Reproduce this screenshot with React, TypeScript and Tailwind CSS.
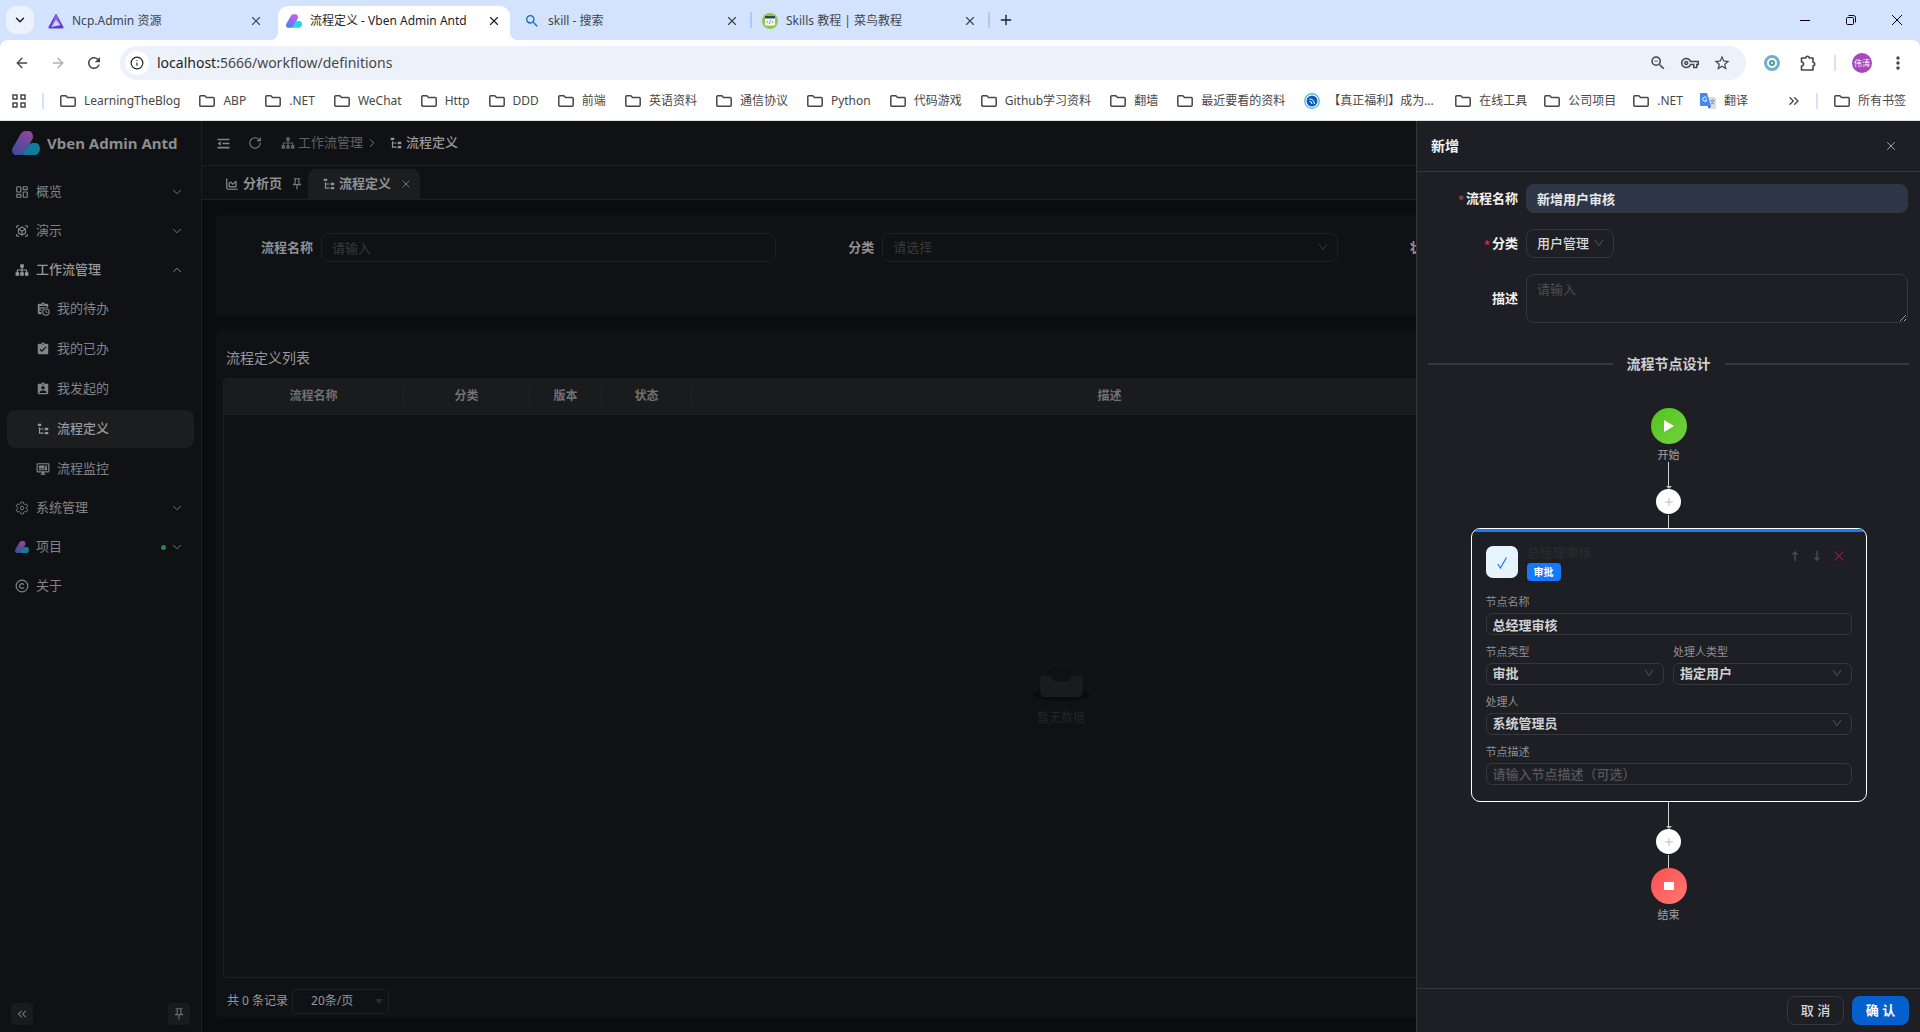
import React from 'react';
import { ArrowLeft, ArrowRight, ChartArea, ChevronDown, ChevronRight, ChevronUp, ChevronsLeft, ChevronsRight, Copyright, Info, LayoutDashboard, Plus, RotateCw, X } from 'lucide-react';
import { MdAssignmentInd, MdMoreVert, MdOutlinePushPin, MdOutlineVpnKey, MdRefresh, MdSearch, MdStarBorder, MdViewInAr, MdZoomOut } from 'react-icons/md';
import { IoSettingsOutline } from 'react-icons/io5';

interface IconProps {
  className?: string;
}

function PathIcon({ d, className }: IconProps & { d: string }) {
  return (
    <svg viewBox="0 0 24 24" fill="currentColor" className={className} aria-hidden="true">
      <path fillRule="evenodd" d={d} />
    </svg>
  );
}

const SITEMAP = 'M9 2v6h2v3H5c-1.11 0-2 .89-2 2v3H1v6h6v-6H5v-3h6v3H9v6h6v-6h-2v-3h6v3h-2v6h6v-6h-2v-3c0-1.11-.89-2-2-2h-6V8h2V2H9z';
const FILE_TREE = 'M3 3h6v4H3V3m12 7h6v4h-6v-4m0 7h6v4h-6v-4m-2-4H7v5h6v2H5V9h2v2h6v2z';
const MONITOR = 'M21 16V4H3v12h18m0-14a2 2 0 0 1 2 2v12a2 2 0 0 1-2 2h-7v2h2v2H8v-2h2v-2H3a2 2 0 0 1-2-2V4c0-1.11.89-2 2-2h18M5 6h9v5H5V6m10 0h4v2h-4V6m4 3v5h-4V9h4M5 12h4v2H5v-2m5 0h4v2h-4v-2z';
const CLIPBOARD_CHECK = 'M10 17l-4-4 1.41-1.41L10 14.17l6.59-6.59L18 9l-8 8M12 3a1 1 0 1 1 0 2 1 1 0 0 1 0-2m7 0h-4.18C14.4 1.84 13.3 1 12 1s-2.4.84-2.82 2H5a2 2 0 0 0-2 2v14a2 2 0 0 0 2 2h14a2 2 0 0 0 2-2V5a2 2 0 0 0-2-2z';

const SitemapIcon = ({ className }: IconProps) => <PathIcon d={SITEMAP} className={className} />;
const FileTreeIcon = ({ className }: IconProps) => <PathIcon d={FILE_TREE} className={className} />;
const MonitorIcon = ({ className }: IconProps) => <PathIcon d={MONITOR} className={className} />;
const ClipboardCheckIcon = ({ className }: IconProps) => <PathIcon d={CLIPBOARD_CHECK} className={className} />;

function ClipboardClockIcon({ className }: IconProps) {
  return (
    <svg viewBox="0 0 24 24" fill="currentColor" className={className} aria-hidden="true">
      <path fillRule="evenodd" d="M19 3h-4.18C14.4 1.84 13.3 1 12 1s-2.4.84-2.82 2H5a2 2 0 0 0-2 2v14a2 2 0 0 0 2 2h5a8 8 0 0 1-1-4H6v-2h3.3a8 8 0 0 1 1-2H6v-2h7a8 8 0 0 1 8-1V5a2 2 0 0 0-2-2m-7 0a1 1 0 1 1 0 2 1 1 0 0 1 0-2M6 7h12v2H6V7z" />
      <circle cx="17" cy="17" r="5.5" fill="none" stroke="currentColor" strokeWidth="2" />
      <path d="M16.2 13.5h1.6v3.2l2.4 1.4-.8 1.3-3.2-1.8z" />
    </svg>
  );
}

function FoldIcon({ className }: IconProps) {
  return (
    <svg viewBox="0 0 24 24" fill="currentColor" className={className} aria-hidden="true">
      <path d="M1 3h22v3H1zM10 10.5h13v3H10zM1 18h22v3H1zM7 8v8l-6-4z" />
    </svg>
  );
}

function FolderIcon() {
  return (
    <svg viewBox="0 0 16 16" className="size-4 shrink-0" fill="none" stroke="#474747" strokeWidth="1.5" aria-hidden="true">
      <path d="M1.7 2.8h4.1l1.7 1.7h6.8q.9 0 .9.9v6.900q0 .9-.9.900H1.700q-.9 0-.9-.9V3.700q0-.9.9-.9z" />
    </svg>
  );
}

function PuzzleIcon({ className }: IconProps) {
  return (
    <svg viewBox="0 0 18 18" className={className} fill="none" stroke="currentColor" strokeWidth="1.6" strokeLinejoin="round" aria-hidden="true">
      <path d="M2.500 4h4.300a1.700 1.700 0 0 1 3.400 0h3.800v4.300a1.700 1.700 0 0 1 0 3.400V16H2.500v-4a2 2 0 0 0 0-4z" />
    </svg>
  );
}

function VbenLogo({ className, bright }: IconProps & { bright?: boolean }) {
  const id = bright ? 'vbenBright' : 'vbenDim';
  return (
    <svg viewBox="0 0 28 24" className={className} aria-hidden="true">
      <defs>
        <linearGradient id={id} x1="0.7" y1="0" x2="0.3" y2="1">
          <stop offset="0" stopColor={bright ? '#c863e6' : '#8d4699'} />
          <stop offset="1" stopColor={bright ? '#4d7bfa' : '#3b4e9b'} />
        </linearGradient>
      </defs>
      <path d="M9 2.500Q10.500 0 13 0h4q2 0 3 2l.8 2q.7 2-.3 4L12.500 22q-1 2-3.500 2H4q-2 0-3-1.500l-.7-1.500q-.7-2 .3-4z" fill={`url(#${id})`} />
      <path d="M16.500 14.500q1.500-2.500 4-2.500H24q2 0 3 2l.7 2q.6 2-.2 4l-1 2q-1 2-3 2H12q-1.500 0-.8-1.500z" fill={bright ? '#21d4f7' : '#0e7c9a'} />
    </svg>
  );
}

function SelectArrow({ className }: IconProps) {
  return (
    <svg viewBox="0 0 10 8" fill="none" stroke="currentColor" className={className} aria-hidden="true">
      <path d="M1 1l4 5.500L9 1" />
    </svg>
  );
}

/* browser window */

const tabs = [
  { title: 'Ncp.Admin 资源', icon: 'ncp' },
  { title: '流程定义 - Vben Admin Antd', icon: 'vben', active: true },
  { title: 'skill - 搜索', icon: 'search' },
  { title: 'Skills 教程 | 菜鸟教程', icon: 'runoob' },
];

const bookmarks = ['LearningTheBlog', 'ABP', '.NET', 'WeChat', 'Http', 'DDD', '前端', '英语资料', '通信协议', 'Python', '代码游戏', 'Github学习资料', '翻墙', '最近要看的资料'];

function Favicon({ icon }: { icon: string }) {
  if (icon === 'vben') return <VbenLogo className="size-4 shrink-0" bright />;
  if (icon === 'search') return <MdSearch className="size-4 shrink-0 text-[#0f6cbd]" />;
  if (icon === 'ncp') {
    return (
      <svg viewBox="0 0 16 16" className="size-4 shrink-0" aria-hidden="true">
        <path d="M8 .5L.5 14q-.3 1.500 1 1.500h13q1.300 0 1-1.500z" fill="#5b3fc4" />
        <path d="M8 2l4.500 9.500L3 14z" fill="#8c6cf0" />
        <path d="M8 7l4.500 5L3.500 14z" fill="#d9cdfb" />
      </svg>
    );
  }
  return (
    <svg viewBox="0 0 16 16" className="size-4 shrink-0" aria-hidden="true">
      <circle cx="8" cy="8" r="8" fill="#8cc84b" />
      <rect x="3" y="3.5" width="10" height="9" rx="1" fill="#fff" />
      <rect x="3" y="3" width="10" height="2.5" fill="#2f4858" />
      <path d="M6 7.500L4.700 9 6 10.500M10 7.500L11.300 9 10 10.500M8.500 7l-1 4" fill="none" stroke="#6b7a80" strokeWidth=".8" />
    </svg>
  );
}

function BrowserTabs() {
  return (
    <div className="flex h-10 items-end bg-[#d3e3fd] pl-1.5 text-[#1f1f1f]">
      <button type="button" aria-label="搜索标签页" className="mb-1.5 mr-1.5 flex size-7 items-center justify-center rounded-[10px] bg-[#ebf2fe]">
        <ChevronDown className="size-3.5" strokeWidth={2.5} />
      </button>
      {tabs.map((tab, index) => (
        <div key={tab.title} className="flex">
          <div className={tab.active ? 'relative flex h-[34px] w-[232px] items-center rounded-t-[10px] bg-white px-2 pb-1' : 'flex h-[34px] w-[232px] items-center px-2 pb-1 text-[#41454d]'}>
            {tab.active && <span className="absolute -left-2 bottom-0 size-2 bg-[radial-gradient(circle_at_0_0,#d3e3fd_8px,#fff_8px)]" />}
            {tab.active && <span className="absolute -right-2 bottom-0 size-2 bg-[radial-gradient(circle_at_100%_0,#d3e3fd_8px,#fff_8px)]" />}
            <Favicon icon={tab.icon} />
            <span className="ml-2 flex-1 truncate text-xs">{tab.title}</span>
            <button type="button" aria-label="关闭标签页" className="flex size-4 items-center justify-center">
              <X className="size-3.5" strokeWidth={2} />
            </button>
          </div>
          <span className={index > 1 ? 'mx-0.5 mt-1.5 h-4 w-0.5 rounded bg-[#a8c7fa]' : 'w-1.5'} />
        </div>
      ))}
      <button type="button" aria-label="新标签页" className="mb-3 ml-1.5 flex size-4 items-center justify-center">
        <Plus className="size-4" />
      </button>
      <div className="ml-auto flex h-10 items-center">
        <button type="button" aria-label="最小化" className="flex w-[46px] justify-center">
          <svg viewBox="0 0 10 10" className="size-2.5" stroke="#000"><path d="M0 5.500h10" /></svg>
        </button>
        <button type="button" aria-label="还原" className="flex w-[46px] justify-center">
          <svg viewBox="0 0 10 10" className="size-2.5" stroke="#000" fill="none"><path d="M.5 3.500q0-1 1-1h5q1 0 1 1v5q0 1-1 1h-5q-1 0-1-1zM2.500.5h5q2 0 2 2v5" /></svg>
        </button>
        <button type="button" aria-label="关闭" className="flex w-[46px] justify-center">
          <svg viewBox="0 0 10 10" className="size-2.5" stroke="#000"><path d="M0 0l10 10M10 0L0 10" /></svg>
        </button>
      </div>
    </div>
  );
}

function AddressBar() {
  return (
    <div className="bg-[#d3e3fd]">
      <div className="flex h-[46px] items-center rounded-t-lg bg-white px-3 text-[#474747]">
        <button type="button" aria-label="后退" className="flex size-5 items-center justify-center"><ArrowLeft className="size-4" /></button>
        <button type="button" aria-label="前进" className="ml-4 flex size-5 items-center justify-center text-[#b0b0b0]"><ArrowRight className="size-4" /></button>
        <button type="button" aria-label="重新加载" className="ml-4 flex size-5 items-center justify-center"><MdRefresh className="size-[18px]" /></button>
        <div className="ml-4 flex h-[34px] flex-1 items-center rounded-full bg-[#ecf1fa] pl-[5px] pr-[15px]">
          <span className="flex size-6 items-center justify-center rounded-full bg-white"><Info className="size-3.5 text-[#1f1f1f]" /></span>
          <div className="ml-2 flex-1 text-sm">
            <span className="text-[#1f1f1f]">localhost:</span>5666/workflow/definitions
          </div>
          <MdZoomOut className="size-[18px]" />
          <MdOutlineVpnKey className="ml-3.5 size-[18px]" />
          <MdStarBorder className="ml-3.5 size-[18px]" />
        </div>
        <svg viewBox="0 0 16 16" className="ml-[18px] size-4" aria-hidden="true">
          <circle cx="8" cy="8" r="6.5" fill="#fff" stroke="#6fb0d2" strokeWidth="3" />
          <circle cx="8" cy="8" r="3" fill="#4f9e9a" />
          <circle cx="8" cy="8" r="1" fill="#fff" />
        </svg>
        <PuzzleIcon className="ml-[19px] size-[18px]" />
        <span className="ml-[17px] h-4 w-0.5 bg-[#d3e3fd]" />
        <button type="button" aria-label="个人资料" className="ml-4 size-5 rounded-full bg-[#a846bb] text-[8px] leading-5 text-white">伟涛</button>
        <button type="button" aria-label="菜单" className="ml-4 flex size-5 items-center justify-center"><MdMoreVert className="size-5" /></button>
      </div>
    </div>
  );
}

function Bookmark({ label, children }: { label: string; children?: React.ReactNode }) {
  return (
    <a href="#" className="flex shrink-0 items-center gap-2">
      {children || <FolderIcon />}
      {label}
    </a>
  );
}

function BookmarkBar() {
  return (
    <nav className="flex h-[35px] items-center border-b border-[#dfe3e1] bg-white pb-1 pl-3 pr-3.5 text-xs text-[#474747]">
      <svg viewBox="0 0 14 14" className="size-3.5 shrink-0" fill="none" stroke="#474747" strokeWidth="1.5" aria-hidden="true">
        <path d="M1 1h4v4H1zM9 1h4v4H9zM1 9h4v4H1zM9 9h4v4H9z" />
      </svg>
      <span className="ml-4 h-4 w-0.5 shrink-0 bg-[#d3e3fd]" />
      <div className="ml-4 flex gap-[19px]">
        {bookmarks.map((name) => <Bookmark key={name} label={name} />)}
        <Bookmark label="【真正福利】成为...">
          <svg viewBox="0 0 16 16" className="size-4 shrink-0" aria-hidden="true">
            <circle cx="8" cy="8" r="7.3" fill="#fff" stroke="#45b0e8" strokeWidth="1.2" />
            <circle cx="8" cy="8" r="5.5" fill="#0b5cb5" />
            <path d="M5.500 6a5 5 0 0 1 5 5M5.500 8.300A2.700 2.700 0 0 1 8 11" fill="none" stroke="#fff" />
          </svg>
        </Bookmark>
      </div>
      <div className="ml-auto flex gap-[17px]">
        <Bookmark label="在线工具" />
        <Bookmark label="公司项目" />
        <Bookmark label=".NET" />
        <Bookmark label="翻译">
          <svg viewBox="0 0 16 16" className="size-4 shrink-0" aria-hidden="true">
            <path d="M7 4h8q1 0 1 1v10q0 1-1 1H10z" fill="#dadce0" />
            <path d="M1 0h6l4 13H1q-1 0-1-1V1q0-1 1-1z" fill="#4688f1" />
            <path d="M8 13h3l-2 3z" fill="#2a56c6" />
            <path d="M6.800 5A2.200 2.200 0 1 0 7 7H5" fill="none" stroke="#fff" strokeWidth="1" />
            <path d="M10.500 7.500h4M12.500 6.500v1M11 11q2.500-1 3-3.500M11.500 8.500q.8 2 2.500 2.500" fill="none" stroke="#7b8086" strokeWidth=".8" />
          </svg>
        </Bookmark>
      </div>
      <ChevronsRight className="ml-[38px] size-4 shrink-0" />
      <span className="ml-3.5 mr-4 h-4 w-0.5 shrink-0 bg-[#d3e3fd]" />
      <Bookmark label="所有书签" />
    </nav>
  );
}

/* admin layout */

function MenuItem({ icon: Icon, label, arrow, active, dot }: { icon: React.ElementType; label: string; arrow?: 'up' | 'down'; active?: boolean; dot?: boolean }) {
  return (
    <button type="button" className={active ? 'flex h-[38px] w-full items-center rounded-lg px-2 font-medium text-[#97989a]' : 'flex h-[38px] w-full items-center rounded-lg px-2 text-[#838486]'}>
      <Icon className="size-3.5 shrink-0" />
      <span className="ml-[7px] flex-1 text-left">{label}</span>
      {dot && <span className="mr-1 size-[5px] rounded-full bg-[#31814f]" />}
      {arrow === 'down' && <ChevronDown className="mr-0.5 size-3.5" strokeWidth={1.5} />}
      {arrow === 'up' && <ChevronUp className="mr-0.5 size-3.5" strokeWidth={1.5} />}
    </button>
  );
}

const workflowMenu = [
  { label: '我的待办', icon: ClipboardClockIcon },
  { label: '我的已办', icon: ClipboardCheckIcon },
  { label: '我发起的', icon: MdAssignmentInd },
  { label: '流程定义', icon: FileTreeIcon, active: true },
  { label: '流程监控', icon: MonitorIcon },
];

function Sidebar() {
  return (
    <aside className="flex w-[202px] shrink-0 flex-col border-r border-[#1e1f22] bg-[#0f1114]">
      <div className="flex h-11 shrink-0 items-center pl-3">
        <VbenLogo className="h-6 w-7" />
        <span className="ml-[7px] text-[15px] font-bold text-[#8c8d8f]">Vben Admin Antd</span>
      </div>
      <nav className="mt-2 flex flex-1 flex-col gap-px px-[7px]">
        <MenuItem icon={LayoutDashboard} label="概览" arrow="down" />
        <MenuItem icon={MdViewInAr} label="演示" arrow="down" />
        <MenuItem icon={SitemapIcon} label="工作流管理" arrow="up" active />
        <div className="flex flex-col gap-0.5">
          {workflowMenu.map(({ label, icon: Icon, active }) => (
            <a key={label} href="#" className={active ? 'flex h-[38px] items-center gap-[7px] rounded-lg bg-[#1c1d1f] pl-[29px] font-medium text-[#97989a]' : 'flex h-[38px] items-center gap-[7px] rounded-lg pl-[29px] text-[#838486]'}>
              <Icon className="size-3.5" />
              {label}
            </a>
          ))}
        </div>
        <MenuItem icon={IoSettingsOutline} label="系统管理" arrow="down" />
        <MenuItem icon={VbenLogo} label="项目" arrow="down" dot />
        <MenuItem icon={Copyright} label="关于" />
      </nav>
      <div className="flex items-center justify-between px-[11px] pb-[7px] text-[#6b6c6e]">
        <button type="button" aria-label="收起菜单" className="flex size-[22px] items-center justify-center rounded bg-[#1a1b1d]"><ChevronsLeft className="size-3.5" /></button>
        <button type="button" aria-label="固定菜单" className="flex size-[22px] items-center justify-center rounded bg-[#1a1b1d]"><MdOutlinePushPin className="size-3.5" /></button>
      </div>
    </aside>
  );
}

function PageHeader() {
  return (
    <>
      <header className="flex h-[45px] shrink-0 items-center border-b border-[#1e1f22] bg-[#0f1114] pl-[15px] text-[#838486]">
        <button type="button" aria-label="折叠侧边栏"><FoldIcon className="size-[13px]" /></button>
        <button type="button" aria-label="刷新" className="ml-[18px]"><RotateCw className="size-3.5" strokeWidth={1.75} /></button>
        <a href="#" className="ml-[19px] flex items-center gap-[3px] text-[#606163]">
          <SitemapIcon className="size-3.5" />
          工作流管理
        </a>
        <ChevronRight className="ml-0.5 size-3.5" strokeWidth={1.5} />
        <span className="ml-2.5 flex items-center gap-[3px] font-medium text-[#97989a]">
          <FileTreeIcon className="size-3.5" />
          流程定义
        </span>
      </header>
      <div className="flex h-[34px] shrink-0 items-end border-b border-[#1e1f22] bg-[#0f1114] pl-[23px] font-bold text-[#8f9092]">
        <a href="#" className="flex h-[30px] items-center gap-1">
          <ChartArea className="size-3.5" />
          分析页
          <MdOutlinePushPin className="ml-1 size-3.5 text-[#77787a]" />
        </a>
        <div className="ml-1 flex h-[30px] items-center gap-[3px] rounded-t-lg bg-[#1c1d1f] pl-3.5 pr-2">
          <FileTreeIcon className="size-3.5" />
          流程定义
          <button type="button" aria-label="关闭" className="ml-1.5"><X className="size-3" strokeWidth={1.5} /></button>
        </div>
      </div>
    </>
  );
}

function SearchForm() {
  return (
    <form className="grid h-[102px] shrink-0 grid-cols-3 items-start gap-2 rounded-md bg-[#0f1114] px-[7px] pt-[18px]">
      <div className="flex items-center">
        <label htmlFor="q-name" className="w-[98px] pr-2 text-right font-bold text-[#8f9092]">流程名称</label>
        <input id="q-name" placeholder="请输入" className="h-[29px] min-w-0 flex-1 rounded-lg border border-[#1e1f22] bg-transparent px-2.5 placeholder:text-[#38393b]" />
      </div>
      <div className="flex items-center">
        <label htmlFor="q-category" className="w-[98px] pr-2 text-right font-bold text-[#8f9092]">分类</label>
        <div className="relative min-w-0 flex-1">
          <select id="q-category" className="block h-[29px] w-full appearance-none rounded-lg border border-[#1e1f22] bg-transparent px-2.5 text-[#38393b]">
            <option>请选择</option>
          </select>
          <SelectArrow className="pointer-events-none absolute right-2.5 top-2.5 h-2 w-2.5 text-[#38393b]" />
        </div>
      </div>
      <div className="flex items-center">
        <label htmlFor="q-status" className="w-[98px] pr-2 text-right font-bold text-[#8f9092]">状态</label>
        <select id="q-status" className="h-[29px] min-w-0 flex-1 appearance-none rounded-lg border border-[#1e1f22] bg-transparent" />
      </div>
    </form>
  );
}

const columns = [
  { title: '流程名称', width: 'w-[180px]' },
  { title: '分类', width: 'w-[126px]' },
  { title: '版本', width: 'w-[72px]' },
  { title: '状态', width: 'w-[90px]' },
  { title: '描述', width: '' },
  { title: '', width: 'w-[370px]' },
];

function DefinitionTable() {
  return (
    <section className="flex min-h-0 flex-1 flex-col rounded-md bg-[#0f1114] px-[7px]">
      <h2 className="pb-[9px] pl-[3px] pt-[18px] text-sm leading-[22px] text-[#97989a]">流程定义列表</h2>
      <div className="flex flex-1 flex-col overflow-hidden rounded border border-[#1e1f22]">
        <table className="w-full table-fixed border-collapse bg-[#1a1b1d] text-xs text-[#707173]">
          <thead>
            <tr className="h-[35px] border-b border-[#1e1f22]">
              {columns.map((column) => (
                <th key={column.title} className={`p-0 font-bold ${column.width}`}>
                  <div className="flex h-[18px] items-center justify-center border-r border-[#242527]">{column.title}</div>
                </th>
              ))}
            </tr>
          </thead>
        </table>
        <div className="flex flex-1 flex-col items-center justify-center">
          <svg viewBox="0 0 64 41" className="h-[37px] w-[57px]" aria-hidden="true">
            <ellipse cx="32" cy="33" rx="32" ry="7" fill="#0a0b0d" />
            <path d="M55 12.800L44.900 1.300C44.400.5 43.700 0 42.900 0H21.100c-.8 0-1.500.5-2 1.300L9 12.800V22h46z" fill="none" stroke="#1f2022" />
            <path d="M41.600 16c0-1.700 1-3 2.300-3H55v18.100c0 2.200-1.300 3.900-3 3.900H12c-1.700 0-3-1.700-3-3.900V13h11.100c1.300 0 2.300 1.300 2.300 3s1 2.900 2.300 2.900h14.600c1.300 0 2.300-1.300 2.300-3z" fill="#1a1b1d" stroke="#1f2022" />
          </svg>
          <p className="mt-2 text-xs text-[#242527]">暂无数据</p>
        </div>
      </div>
      <div className="flex h-10 shrink-0 items-center pl-1 pt-1.5 text-xs text-[#97989a]">
        <span>共 0 条记录</span>
        <div className="relative ml-1">
          <select aria-label="每页条数" className="block h-[25px] w-[97px] appearance-none rounded border border-[#1e1f22] bg-transparent pl-[18px]">
            <option>20条/页</option>
          </select>
          <span className="pointer-events-none absolute right-1.5 top-2.5 border-x-4 border-t-[5px] border-x-transparent border-t-[#2c2d2f]" />
        </div>
      </div>
    </section>
  );
}

/* drawer */

function NodeSelect({ id, label, value }: { id: string; label: string; value: string }) {
  return (
    <div className="min-w-0 flex-1">
      <label htmlFor={id} className="mb-[3px] block text-[11px] leading-4 text-[#8f9092]">{label}</label>
      <div className="relative">
        <select id={id} className="block h-[22px] w-full appearance-none rounded-md border border-[#36373c] bg-transparent px-1.5 font-bold text-[#cfd0d1]">
          <option>{value}</option>
        </select>
        <SelectArrow className="pointer-events-none absolute right-2.5 top-1.5 h-2 w-2.5 text-[#55565a]" />
      </div>
    </div>
  );
}

function NodeInput({ id, label, value, placeholder }: { id: string; label: string; value?: string; placeholder?: string }) {
  return (
    <div>
      <label htmlFor={id} className="mb-[3px] block text-[11px] leading-4 text-[#8f9092]">{label}</label>
      <input id={id} defaultValue={value} placeholder={placeholder} className="block h-[22px] w-full rounded-md border border-[#36373c] bg-transparent px-1.5 font-bold text-[#cfd0d1] placeholder:font-medium placeholder:text-[#56575b]" />
    </div>
  );
}

function Connector() {
  return (
    <>
      <div className="flex h-[27px] flex-col items-center">
        <span className="w-px flex-1 bg-[#d0d0d0]" />
        <span className="border-x-[3px] border-t-[3px] border-x-transparent border-t-[#bfbfbf]" />
      </div>
      <button type="button" aria-label="添加节点" className="flex size-[25px] items-center justify-center rounded-full bg-white text-[#bfbfbf]">
        <Plus className="size-3" strokeWidth={2} />
      </button>
      <span className="mt-px h-[13px] w-px bg-[#d0d0d0]" />
    </>
  );
}

function ApprovalNode() {
  return (
    <div className="w-[396px] overflow-hidden rounded-[9px] border border-white">
      <div className="h-[3px] bg-[#1677ff]" />
      <div className="flex flex-col gap-[9px] px-3.5 pb-4 pt-3.5">
        <div className="mb-1 flex h-[35px]">
          <span className="flex size-8 items-center justify-center rounded-[7px] bg-[#e6f4ff]">
            <svg viewBox="0 0 10 12" className="mt-0.5 h-3 w-2.5" fill="none" stroke="#1677ff" strokeWidth="1.2"><path d="M0.800 7l2.600 4L9.500.5" /></svg>
          </span>
          <div className="ml-[9px] flex flex-1 flex-col items-start">
            <span className="font-medium leading-[13px] text-[#292a2d]">总经理审核</span>
            <span className="mt-1 h-[18px] rounded bg-[#1677ff] px-[7px] text-[10px] font-bold leading-[18px] text-white">审批</span>
          </div>
          <div className="mt-1 flex h-3 items-center gap-3 pr-2 text-[#4a4b4e]">
            <button type="button" aria-label="上移"><svg viewBox="0 0 10 10" className="size-2.5" fill="none" stroke="currentColor"><path d="M5 10V1M2.500 3.500L5 1l2.500 2.500" strokeWidth="1.5" /></svg></button>
            <button type="button" aria-label="下移"><svg viewBox="0 0 10 10" className="size-2.5" fill="none" stroke="currentColor"><path d="M5 0v9M2.500 6.500L5 9l2.500-2.500" strokeWidth="1.5" /></svg></button>
            <button type="button" aria-label="删除"><svg viewBox="0 0 10 10" className="size-2.5" stroke="#7a2240" strokeWidth="1.2"><path d="M.5.500l9 9M9.500.500l-9 9" /></svg></button>
          </div>
        </div>
        <NodeInput id="node-name" label="节点名称" value="总经理审核" />
        <div className="flex gap-[9px]">
          <NodeSelect id="node-type" label="节点类型" value="审批" />
          <NodeSelect id="assignee-type" label="处理人类型" value="指定用户" />
        </div>
        <NodeSelect id="assignee" label="处理人" value="系统管理员" />
        <NodeInput id="node-desc" label="节点描述" placeholder="请输入节点描述（可选）" />
      </div>
    </div>
  );
}

function Drawer() {
  return (
    <div role="dialog" aria-labelledby="drawer-title" className="absolute inset-y-0 right-0 flex w-[504px] flex-col border-l border-[#36373c] bg-[#1e1f24]">
      <div className="flex h-[51px] shrink-0 items-center justify-between border-b border-[#36373c] pl-3.5 pr-[22px]">
        <h2 id="drawer-title" className="text-sm font-bold text-[#f2f2f2]">新增</h2>
        <button type="button" aria-label="关闭" className="text-[#b4b5b7]"><X className="size-3.5" strokeWidth={1.5} /></button>
      </div>
      <div className="flex-1 overflow-hidden px-[11px] pt-3">
        <form className="flex flex-col gap-4 pr-px">
          <div className="flex h-[29px] items-center">
            <label htmlFor="name" className="w-[98px] pr-2 text-right font-bold text-[#f2f2f2]"><span className="mr-0.5 text-[11px] font-normal text-[#e0355e]">*</span>流程名称</label>
            <input id="name" defaultValue="新增用户审核" className="h-[29px] flex-1 rounded-lg border border-[#36373c] bg-[#2d3748] px-2.5 font-bold text-[#e8e9ea]" />
          </div>
          <div className="flex h-[29px] items-center">
            <label htmlFor="category" className="w-[98px] pr-2 text-right font-bold text-[#f2f2f2]"><span className="mr-0.5 text-[11px] font-normal text-[#e0355e]">*</span>分类</label>
            <div className="relative">
              <select id="category" className="block h-[29px] w-[88px] appearance-none rounded-lg border border-[#36373c] bg-transparent pl-2.5 font-medium text-[#d7d8d9]">
                <option>用户管理</option>
              </select>
              <SelectArrow className="pointer-events-none absolute right-2.5 top-2.5 h-2 w-2.5 text-[#55565a]" />
            </div>
          </div>
          <div className="flex items-center">
            <label htmlFor="description" className="w-[98px] pr-2 text-right font-bold text-[#f2f2f2]">描述</label>
            <textarea id="description" placeholder="请输入" className="block h-[49px] flex-1 rounded-lg border border-[#36373c] bg-transparent px-2.5 py-[5px] placeholder:text-[#4d4e52]" />
          </div>
        </form>
        <div className="mt-[30px] flex h-[22px] items-center gap-3.5">
          <span className="h-0.5 flex-1 bg-[#36373c]" />
          <h3 className="text-sm font-bold text-[#cfd0d1]">流程节点设计</h3>
          <span className="h-0.5 flex-1 bg-[#36373c]" />
        </div>
        <div className="mt-[33px] flex flex-col items-center">
          <span className="flex size-9 items-center justify-center rounded-full bg-linear-135 from-[#52c41a] to-[#73d13d]">
            <svg viewBox="0 0 10 12" className="h-3 w-2.5" fill="#fff"><path d="M0 0l10 6-10 6z" /></svg>
          </span>
          <span className="mt-1 text-[11px] font-medium leading-[14px] text-[#8f9092]">开始</span>
          <Connector />
          <ApprovalNode />
          <Connector />
          <span className="flex size-9 items-center justify-center rounded-full bg-linear-135 from-[#ff4d4f] to-[#ff7875]">
            <span className="h-2 w-2.5 bg-white" />
          </span>
          <span className="mt-1 text-[11px] font-medium leading-[14px] text-[#8f9092]">结束</span>
        </div>
      </div>
      <div className="flex h-11 shrink-0 items-center justify-end gap-3 border-t border-[#36373c] pr-[11px]">
        <button type="button" className="h-[29px] w-[57px] rounded-lg border border-[#36373c] font-medium text-[#d7d8d9]">取 消</button>
        <button type="button" className="-ml-1 h-[29px] w-[57px] rounded-lg bg-[#0560cd] font-bold text-white">确 认</button>
      </div>
    </div>
  );
}

export default function App() {
  return (
    <div className="flex h-screen flex-col overflow-hidden font-['Noto_Sans','Noto_Sans_CJK_SC',sans-serif]">
      <BrowserTabs />
      <AddressBar />
      <BookmarkBar />
      <div className="relative flex min-h-0 flex-1 text-[13px]">
        <Sidebar />
        <div className="flex min-w-0 flex-1 flex-col bg-[#0b0c0e]">
          <PageHeader />
          <main className="flex min-h-0 flex-1 flex-col gap-3 px-3.5 pb-3.5 pt-[15px]">
            <SearchForm />
            <DefinitionTable />
          </main>
        </div>
        <Drawer />
      </div>
    </div>
  );
}
